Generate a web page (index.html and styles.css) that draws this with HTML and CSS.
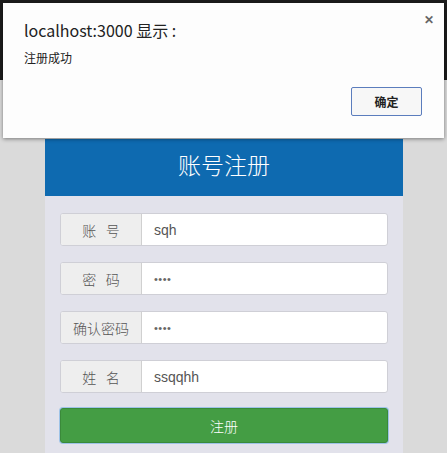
FILE: index.html
```html
<!DOCTYPE html>
<html lang="zh-CN">
<head>
<meta charset="utf-8">
<title>账号注册</title>
<link rel="stylesheet" href="styles.css">
</head>
<body>
<div class="band"></div>
<div class="panel">
  <div class="panel-head">账号注册</div>
  <div class="panel-body">
    <div class="group"><span class="addon">账&nbsp;&nbsp;&nbsp;号</span><span class="field">sqh</span></div>
    <div class="group"><span class="addon">密&nbsp;&nbsp;&nbsp;码</span><span class="field dots">••••</span></div>
    <div class="group"><span class="addon">确认密码</span><span class="field dots">••••</span></div>
    <div class="group"><span class="addon">姓&nbsp;&nbsp;&nbsp;名</span><span class="field">ssqqhh</span></div>
    <div class="btn">注册</div>
  </div>
</div>
<div class="dialog">
  <div class="close">✕</div>
  <div class="dlg-title">localhost:3000 显示 :</div>
  <div class="dlg-msg">注册成功</div>
  <div class="dlg-actions"><span class="dlg-btn">确定</span></div>
</div>
</body>
</html>
```
FILE: styles.css
```css
html, body {
  margin: 0;
  padding: 0;
}
body {
  background: #dadada;
  width: 447px;
  height: 453px;
  overflow: hidden;
  font-family: "Liberation Sans", "Noto Sans CJK SC", sans-serif;
  position: relative;
}
.band {
  height: 80px;
  background: #1c1c1c;
}
.panel {
  width: 358px;
  margin: 59px 0 0 45px;
}
.panel-head {
  height: 57px;
  background: #0e6ab0;
  color: #fff;
  font-size: 23px;
  line-height: 50px;
  text-align: center;
  font-family: "Noto Sans CJK SC", sans-serif;
  font-weight: 300;
}
.panel-body {
  background: #e2e2eb;
  padding: 17px 15px 20px;
  display: flex;
  flex-direction: column;
  gap: 16px;
}
.group {
  display: flex;
  height: 33px;
  box-sizing: border-box;
  border: 1px solid #cfcfd6;
  border-radius: 3px;
  overflow: hidden;
  background: #fff;
}
.addon {
  width: 80px;
  background: #eeeeee;
  border-right: 1px solid #d0d0d0;
  color: #555;
  font-size: 14px;
  font-weight: 300;
  font-family: "Noto Sans CJK SC", sans-serif;
  display: flex;
  align-items: center;
  justify-content: center;
}
.field {
  flex: 1;
  padding-left: 12px;
  color: #555;
  font-size: 14px;
  display: flex;
  align-items: center;
}
.dots {
  font-size: 11px;
  letter-spacing: 0.5px;
  color: #666;
}
.btn {
  margin-top: -1px;
  height: 35px;
  box-sizing: border-box;
  background: #449d44;
  border: 1px solid #3a8a3a;
  border-radius: 3px;
  box-shadow: 0 0 0 1px #9ec3e8;
  color: #fff;
  font-size: 14px;
  font-weight: 300;
  font-family: "Noto Sans CJK SC", sans-serif;
  display: flex;
  align-items: center;
  justify-content: center;
}
.dialog {
  position: absolute;
  left: 3px;
  top: 3px;
  width: 441px;
  height: 135px;
  box-sizing: border-box;
  background: #fdfdfd;
  box-shadow: 0 1px 4px rgba(0,0,0,0.45);
  padding: 16px 21px 0 21px;
  font-family: "Noto Sans CJK SC", sans-serif;
  color: #222;
}
.close {
  position: absolute;
  right: 10px;
  top: 7px;
  font-size: 12px;
  font-weight: bold;
  color: #666;
}
.dlg-title {
  font-size: 16px;
  line-height: 22px;
}
.dlg-msg {
  font-size: 12px;
  margin-top: 8px;
  line-height: 17px;
}
.dlg-actions {
  display: flex;
  justify-content: flex-end;
  margin-top: 21px;
  padding-right: 1px;
}
.dlg-btn {
  width: 71px;
  height: 29px;
  box-sizing: border-box;
  border: 1px solid #5b7dbd;
  border-radius: 2px;
  background: #f7f7f7;
  font-size: 12px;
  font-weight: bold;
  display: flex;
  align-items: center;
  justify-content: center;
}
```
